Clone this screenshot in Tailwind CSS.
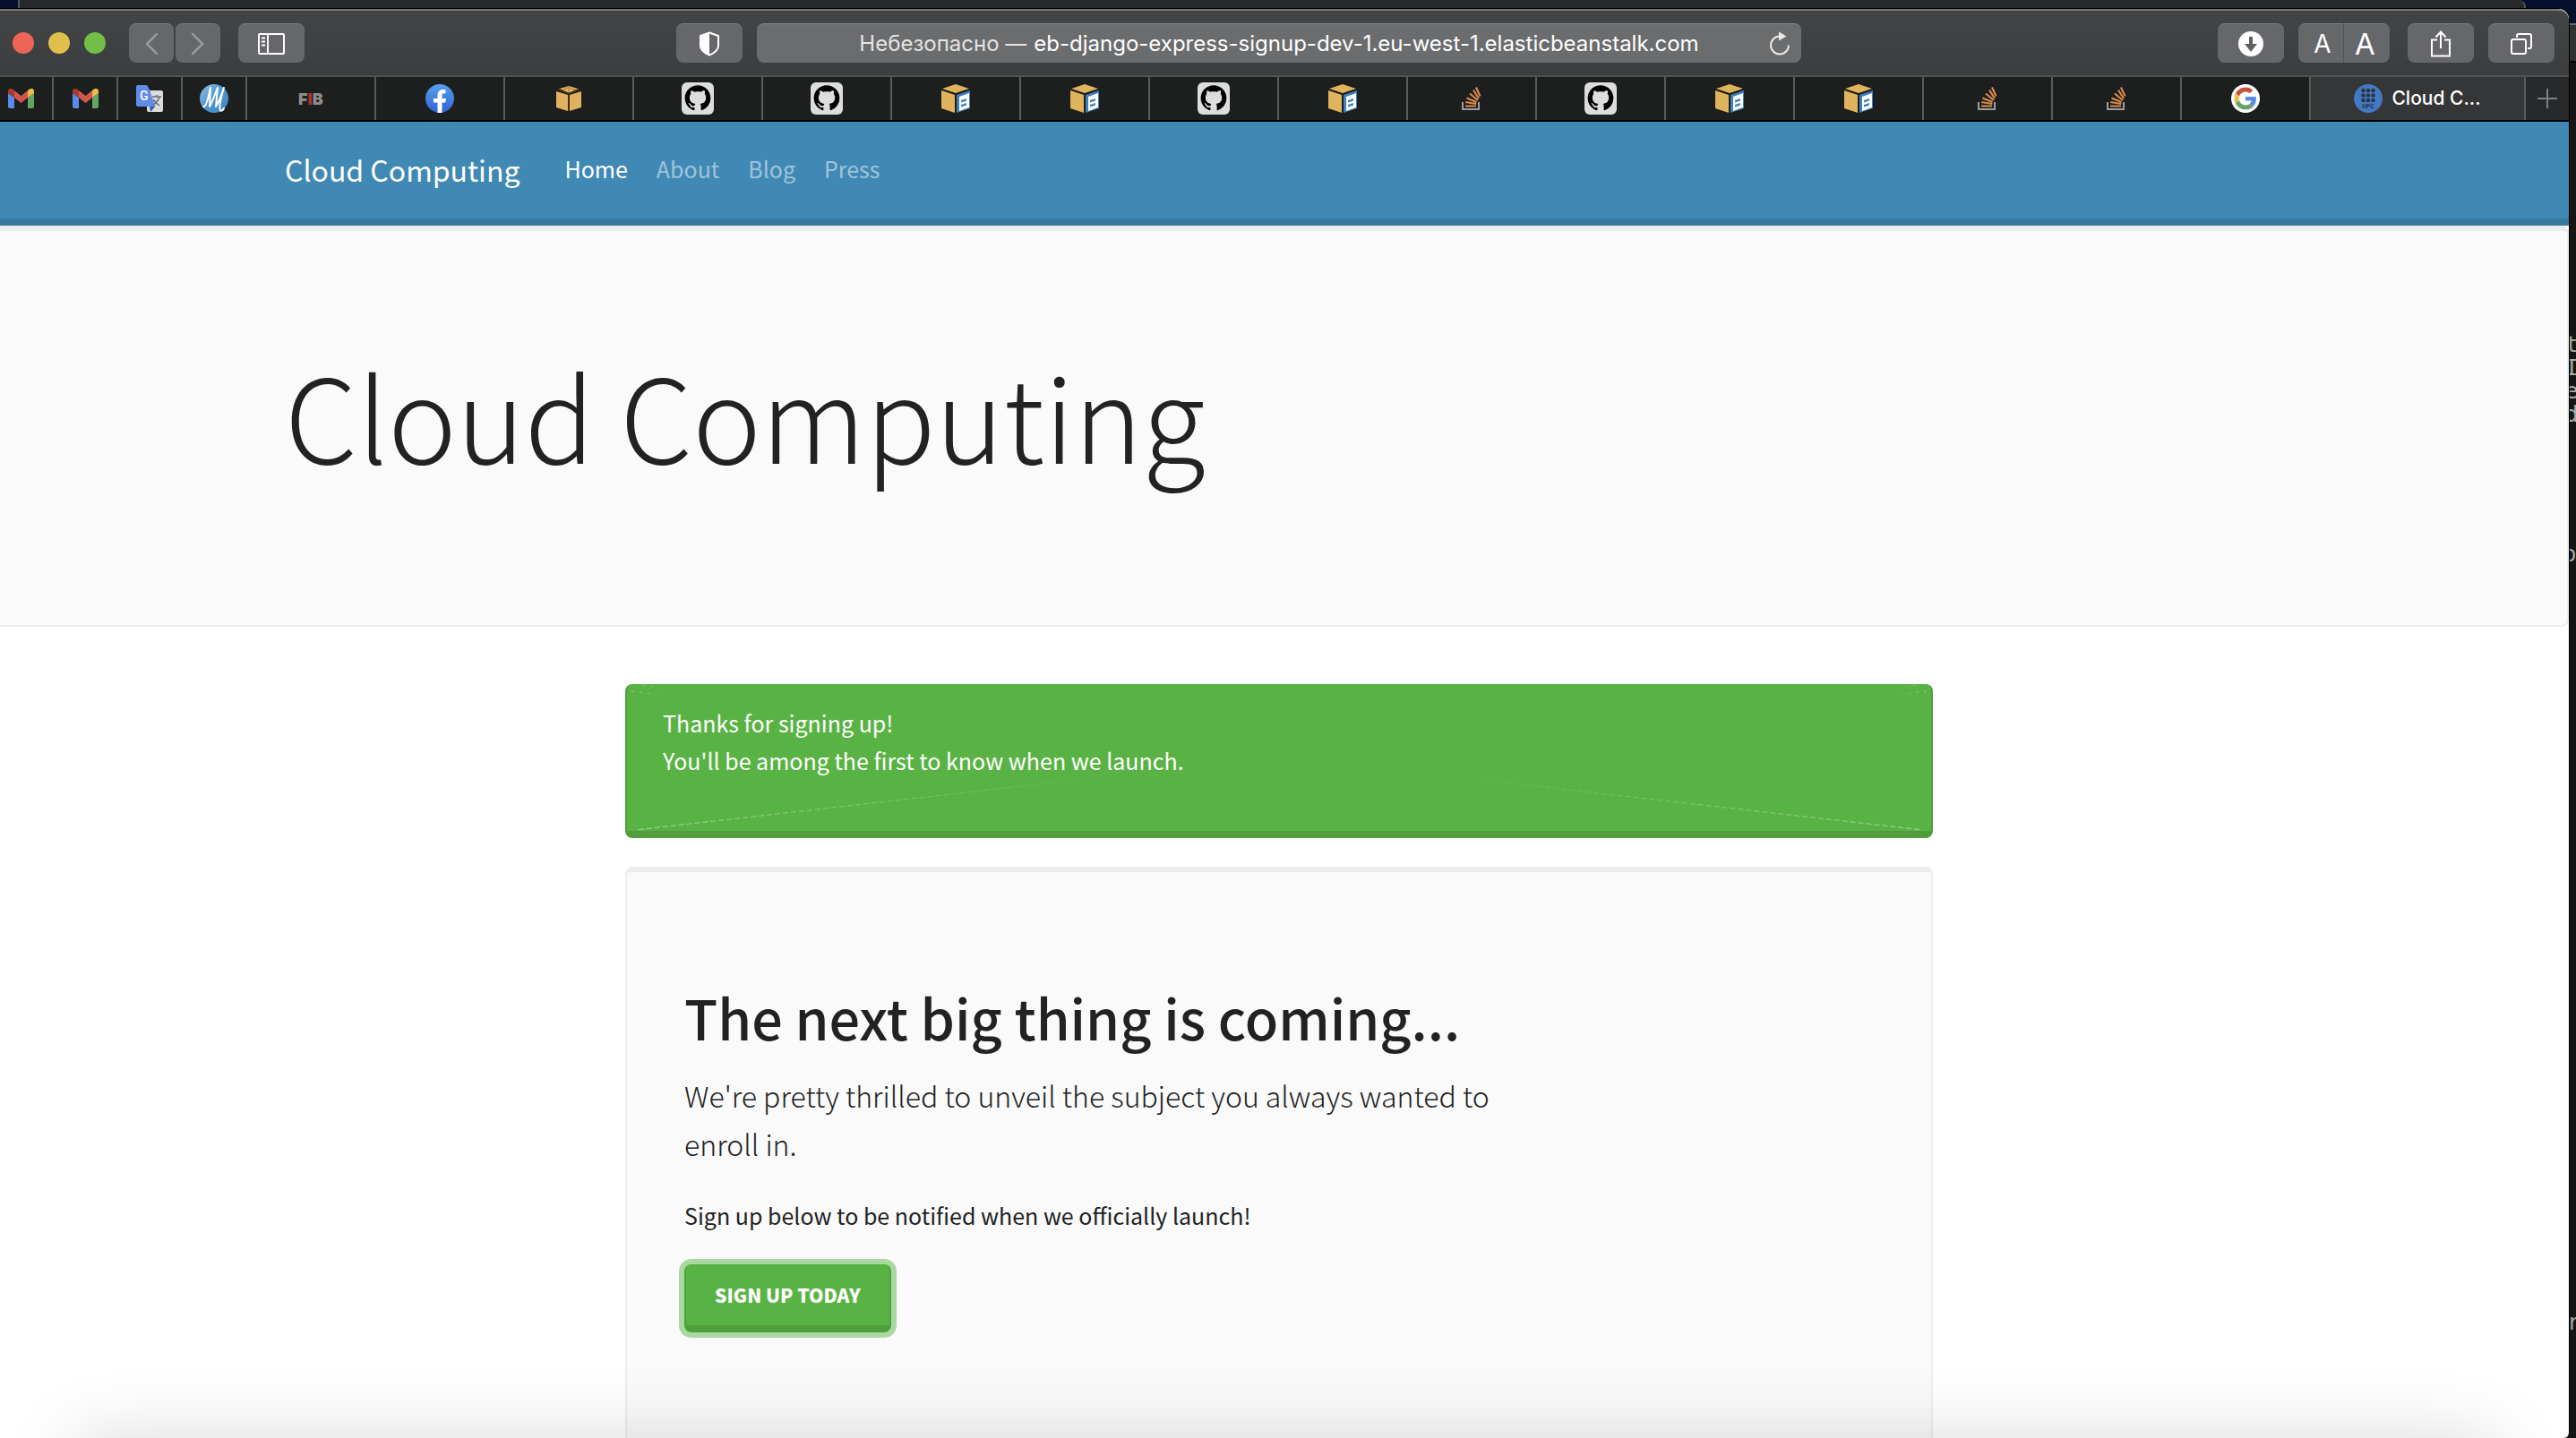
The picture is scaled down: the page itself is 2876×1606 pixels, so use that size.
<!DOCTYPE html>
<html lang="en">
<head>
<meta charset="utf-8">
<title>Cloud Computing</title>
<script src="https://cdn.jsdelivr.net/npm/@tailwindcss/browser@4"></script>
</head>
<body class="relative h-screen overflow-hidden bg-[#04102c] font-['Noto_Sans_CJK_SC','Noto_Sans',sans-serif] text-[#222]">

<!-- Gradients must stay rendered to be usable, so this one is sized to zero rather than hidden -->
<svg class="absolute size-0" aria-hidden="true">
  <linearGradient id="mg" x1="0" y1="0" x2="1" y2="1"><stop offset="0" stop-color="#8fc0e6"/><stop offset=".5" stop-color="#4f96cf"/><stop offset="1" stop-color="#3f86c2"/></linearGradient>
  <linearGradient id="fbg" x1="0" y1="0" x2="0" y2="1"><stop offset="0" stop-color="#56a0ee"/><stop offset="1" stop-color="#2f62d4"/></linearGradient>
</svg>
<svg class="hidden" aria-hidden="true">
  <symbol id="gmail" viewBox="0 0 29 22">
    <path d="M0 5v15c0 1 1 2 2 2h5V10z" fill="#5b8bea"/>
    <path d="M29 5v15c0 1-1 2-2 2h-5V10z" fill="#62a564"/>
    <path d="M0 5v-2C0 0 3-1 5 .5L7 2v8L0 5z" fill="#a83a30"/>
    <path d="M29 5v-2C29 0 26-1 24 .5L22 2v8l7-5z" fill="#e9bc4c"/>
    <path d="M7 2l7.500 6L22 2v8l-7.500 6L7 10z" fill="#d2574a"/>
  </symbol>
  <symbol id="translate" viewBox="0 0 30 30">
    <rect x="12" y="6" width="18" height="24" rx="2" fill="#dcdcdc"/>
    <path d="M15 23h7l-6 7z" fill="#3a55b0"/>
    <path d="M2 0h10l3 5 6 19H2a2 2 0 0 1-2-2V2a2 2 0 0 1 2-2z" fill="#5f8ce8"/>
    <path d="M18 13h10M23 11v2m3 0c-1 4-4 7-7 9m0-6c2 3 4 5 7 7" stroke="#5d6f7a" stroke-width="1.500" fill="none"/>
    <text x="4" y="17" font-family="Roboto, sans-serif" font-size="14" font-weight="500" fill="#fff">G</text>
  </symbol>
  <symbol id="script-m" viewBox="0 0 32 32">
    <circle cx="16" cy="16" r="16" fill="url(#mg)"/>
    <path d="M4 25c3 1 5-8 8-21l-1 21c4-7 6-14 9-21l-2 21c4-6 6-13 9-21-3 10-6 22-4 25 1 2 3 0 4-2" fill="none" stroke="#fff" stroke-width="2" stroke-linejoin="round" stroke-linecap="round"/>
  </symbol>
  <symbol id="facebook" viewBox="0 0 32 32">
    <circle cx="16" cy="16" r="16" fill="url(#fbg)"/>
    <path d="M13.500 32V20.500H9V16h4.500v-3.500C13.500 8.500 16 6 19.500 6c1.500 0 3 .3 3 .3v4h-1.700c-2 0-2.300 1-2.300 2.200V16h4.500l-.8 4.500h-3.700V32z" fill="#fff"/>
  </symbol>
  <symbol id="box" viewBox="0 0 28 28">
    <path d="M14 0l12 3.500-12 4.500L2 3.500z" fill="#dfb160"/>
    <path d="M0 6l13 4v18L0 24z" fill="#dfb160"/>
    <path d="M28 6l-13 4v18l13-4z" fill="#dfb160"/>
    <path d="M5 5.500l9-4 9 4M14 9V2" stroke="#6b4f1e" stroke-width="1" fill="none" opacity=".5"/>
    <path d="M3 4l11 5 11-5M14 9v19" stroke="#3b2b12" stroke-width="2" fill="none"/>
  </symbol>
  <symbol id="github" viewBox="0 0 36 36">
    <rect width="36" height="36" rx="6" fill="#dcdddd"/>
    <path transform="translate(3.600 3.200) scale(1.800)" d="M8 0C3.580 0 0 3.580 0 8c0 3.540 2.290 6.530 5.470 7.590.4.070.55-.17.55-.38 0-.19-.01-.82-.01-1.490-2.010.37-2.530-.49-2.690-.94-.09-.23-.48-.94-.82-1.130-.28-.15-.68-.52-.01-.53.63-.01 1.080.58 1.230.82.72 1.210 1.870.87 2.330.66.070-.52.28-.87.51-1.070-1.780-.2-3.640-.89-3.640-3.950 0-.87.31-1.590.82-2.150-.08-.2-.36-1.020.08-2.120 0 0 .67-.21 2.200.82.64-.18 1.320-.27 2-.27.68 0 1.360.09 2 .27 1.530-1.040 2.200-.82 2.200-.82.44 1.100.16 1.920.08 2.120.51.56.82 1.270.82 2.150 0 3.070-1.870 3.750-3.650 3.950.29.25.54.73.54 1.480 0 1.070-.01 1.930-.01 2.200 0 .21.15.46.55.38A8.013 8.013 0 0016 8c0-4.420-3.580-8-8-8z"/>
  </symbol>
  <symbol id="aws" viewBox="0 0 32 32">
    <path d="M16 0l15 5-15 5L1 5z" fill="#dfb45c"/>
    <path d="M0 7l15 5v20L0 27z" fill="#dfb45c"/>
    <path d="M17 12l15-5v20l-15 5z" fill="#3f7fba"/>
    <path d="M20 14l11-4v16l-11 4z" fill="#fff"/>
    <path d="M22 18l6-2v2.500l-6 2zM22 23l6-2v2.500l-6 2z" fill="#3f7fba"/>
  </symbol>
  <symbol id="stack" viewBox="0 0 22 26">
    <path d="M1 17v8h18v-8" fill="none" stroke="#9b9fa3" stroke-width="2"/>
    <path d="M4 21.500h12M4.300 17l12 2M5.500 12.500l11 4.500M9 7.500l9 7.500M13 3.500l6 9.500M16 .5l4.500 10" stroke="#d98a4b" stroke-width="2.200" fill="none"/>
  </symbol>
  <symbol id="google" viewBox="0 0 32 32">
    <circle cx="16" cy="16" r="16" fill="#fff"/>
    <g transform="translate(3.500 3.500) scale(.52)">
      <path fill="#c9503f" d="M24 9.500c3.540 0 6.710 1.220 9.210 3.600l6.850-6.850C35.900 2.380 30.470 0 24 0 14.620 0 6.510 5.380 2.560 13.220l7.980 6.190C12.430 13.720 17.740 9.500 24 9.500z"/>
      <path fill="#5b8bea" d="M46.980 24.550c0-1.570-.15-3.090-.38-4.550H24v9.020h12.940c-.58 2.960-2.260 5.480-4.780 7.180l7.730 6c4.510-4.180 7.090-10.360 7.090-17.650z"/>
      <path fill="#e9bc4c" d="M10.530 28.590c-.48-1.450-.76-2.990-.76-4.590s.27-3.140.76-4.590l-7.980-6.190C.92 16.460 0 20.120 0 24c0 3.880.92 7.540 2.560 10.780l7.970-6.190z"/>
      <path fill="#62a564" d="M24 48c6.480 0 11.930-2.130 15.890-5.810l-7.730-6c-2.150 1.450-4.920 2.300-8.160 2.300-6.260 0-11.570-4.220-13.470-9.910l-7.980 6.190C6.510 42.620 14.620 48 24 48z"/>
    </g>
  </symbol>
  <symbol id="upc" viewBox="0 0 32 32">
    <circle cx="16" cy="16" r="16" fill="#4379c4"/>
    <g fill="#2b3440">
      <circle cx="10.500" cy="7" r="2.300"/><circle cx="16" cy="7" r="2.300"/><circle cx="21.500" cy="7" r="2.300"/>
      <circle cx="10.500" cy="12.500" r="2.300"/><circle cx="16" cy="12.500" r="2.300"/><circle cx="21.500" cy="12.500" r="2.300"/>
      <circle cx="10.500" cy="18" r="2.300"/><circle cx="16" cy="18" r="2.300"/><circle cx="21.500" cy="18" r="2.300"/>
    </g>
    <text x="16" y="27" text-anchor="middle" font-family="Roboto, sans-serif" font-size="7" font-weight="700" fill="#2b3440">UPC</text>
  </symbol>
</svg>

<!-- Windows behind the browser -->
<div class="absolute top-0 left-5 right-14 h-3 rounded-tr-lg border-x-2 border-[#55575a] bg-[#27282a]"></div>
<aside class="absolute top-[26px] right-0 bottom-0 w-6 overflow-hidden bg-[#151515] font-['DejaVu_Sans_Mono',monospace] text-[24px] leading-[26px] text-[#a9a9a9]" aria-hidden="true">
  <div class="h-11 border-t-2 border-b-2 border-t-[#6a6b6d] border-b-black bg-[#303133]"></div>
  <p class="absolute top-[346px] left-3">t<br>I<br>e<br>d</p>
  <p class="absolute top-[580px] left-[10px]">o</p>
  <p class="absolute top-[1438px] left-[14px]">r</p>
</aside>

<!-- Browser window -->
<div class="absolute top-[9px] bottom-0 -left-3 right-[7px] flex flex-col overflow-hidden rounded-tr-xl rounded-br-md border-t border-r border-black bg-white">
  <header class="shrink-0 rounded-tr-xl border-t-2 border-[#77787a] bg-linear-to-b from-[#434446] to-[#37383a] font-['Inter','Noto_Sans',sans-serif] text-white">
    <div class="flex h-[74px] items-center border-b-2 border-[#505153] pr-4 pl-[26px]">
      <div class="flex gap-4">
        <button aria-label="Close" class="size-6 rounded-full bg-[#ee6558]"></button>
        <button aria-label="Minimise" class="size-6 rounded-full bg-[#e0c04c]"></button>
        <button aria-label="Zoom" class="size-6 rounded-full bg-[#71bf47]"></button>
      </div>
      <div class="ml-[26px] flex gap-0.5">
        <button aria-label="Back" class="flex h-11 w-[50px] items-center justify-center rounded-lg border-t border-[#7d7e80] bg-[#66676a]"><svg class="h-6 w-4" viewBox="0 0 16 24" fill="none" stroke="#97989a" stroke-width="2.500" stroke-linecap="round" stroke-linejoin="round"><path d="M14 1L3 12l11 11"/></svg></button>
        <button aria-label="Forward" class="flex h-11 w-[50px] items-center justify-center rounded-lg border-t border-[#7d7e80] bg-[#66676a]"><svg class="h-6 w-4" viewBox="0 0 16 24" fill="none" stroke="#97989a" stroke-width="2.500" stroke-linecap="round" stroke-linejoin="round"><path d="M2 1l11 11L2 23"/></svg></button>
      </div>
      <button aria-label="Sidebar" class="ml-5 flex h-11 w-[74px] items-center justify-center rounded-lg border-t border-[#7d7e80] bg-[#66676a]"><svg class="h-6 w-[30px]" viewBox="0 0 30 24" fill="none" stroke="#fff" stroke-width="2"><rect x="1" y="1" width="28" height="22" rx="1"/><path d="M11 1v22M4 5.500h4M4 9.500h4M4 13.500h4"/></svg></button>
      <div class="flex-[415]"></div>
      <button aria-label="Privacy report" class="flex h-11 w-[74px] items-center justify-center rounded-lg border-t border-[#7d7e80] bg-[#66676a]"><svg class="h-7 w-6" viewBox="0 0 24 28"><path d="M12 1.500L22 5v11c0 5-5 8.500-10 10.500C7 24.500 2 21 2 16V5z" fill="none" stroke="#fff" stroke-width="2"/><path d="M12 1L1.500 5v11c0 5 5 9 10.500 11z" fill="#fff"/></svg></button>
      <div class="ml-4 flex h-11 w-[1166px] items-center rounded-lg border-t border-[#87888a] bg-[#6b6c6e] px-3 text-[24px]">
        <label class="flex flex-1 items-center justify-center gap-2 pl-6 whitespace-nowrap"><span class="text-[#e4e4e4]">Небезопасно —</span><input type="text" class="field-sizing-content bg-transparent outline-none" value="eb-django-express-signup-dev-1.eu-west-1.elasticbeanstalk.com"></label>
        <button aria-label="Reload" class="h-7 w-6"><svg class="h-7 w-6" viewBox="0 0 24 28" fill="none" stroke="#e8e8e8" stroke-width="2"><path d="M12 5.500A10 10 0 1 0 22 15.500"/><path d="M11 .5v10l8.500-5z" fill="#e8e8e8" stroke="none"/></svg></button>
      </div>
      <div class="flex-[465]"></div>
      <button aria-label="Downloads" class="flex h-11 w-[74px] items-center justify-center rounded-lg border-t border-[#7d7e80] bg-[#66676a]"><svg class="size-7" viewBox="0 0 28 28"><circle cx="14" cy="14" r="14" fill="#fff"/><path d="M12 6h4v8h5l-7 9-7-9h5z" fill="#5f6062"/></svg></button>
      <div class="ml-4 flex">
        <button aria-label="Smaller text" class="h-11 w-[51px] rounded-l-lg border-t border-r border-t-[#7d7e80] border-r-[#505153] bg-[#66676a] pl-1 text-[28px] leading-10">A</button>
        <button aria-label="Larger text" class="h-11 w-[51px] rounded-r-lg border-t border-[#7d7e80] bg-[#66676a] pr-1 text-[33px] leading-10">A</button>
      </div>
      <button aria-label="Share" class="ml-5 flex h-11 w-[74px] items-center justify-center rounded-lg border-t border-[#7d7e80] bg-[#66676a]"><svg class="h-[30px] w-6" viewBox="0 0 24 30" fill="none" stroke="#fff" stroke-width="2"><path d="M8 10.500H2V28.500h20v-18h-6M12 20V2M6.500 7.500L12 1.500l5.500 6"/></svg></button>
      <button aria-label="Tab overview" class="ml-4 flex h-11 w-[74px] items-center justify-center rounded-lg border-t border-[#7d7e80] bg-[#66676a]"><svg class="size-6" viewBox="0 0 24 24" fill="none" stroke="#fff" stroke-width="2"><rect x="1" y="7" width="16" height="16" rx="2"/><path d="M7 5V3a2 2 0 0 1 2-2h12a2 2 0 0 1 2 2v12a2 2 0 0 1-2 2h-2"/></svg></button>
    </div>
    <nav aria-label="Tabs" class="flex h-[50px] items-stretch border-b-2 border-black bg-[#1d1e1e]">
      <a href="#" aria-label="Gmail" class="flex w-[72px] items-center justify-center border-r-2 border-[#5a5b5c]"><svg class="h-[22px] w-[29px]"><use href="#gmail"/></svg></a>
      <a href="#" aria-label="Gmail" class="flex w-[72px] items-center justify-center border-r-2 border-[#5a5b5c]"><svg class="h-[22px] w-[29px]"><use href="#gmail"/></svg></a>
      <a href="#" aria-label="Translate" class="flex w-[72px] items-center justify-center border-r-2 border-[#5a5b5c]"><svg class="size-[30px]"><use href="#translate"/></svg></a>
      <a href="#" aria-label="M" class="flex w-[72px] items-center justify-center border-r-2 border-[#5a5b5c]"><svg class="size-8"><use href="#script-m"/></svg></a>
      <a href="#" class="flex flex-1 items-center justify-center border-r-2 border-[#5a5b5c] text-[18px] font-black text-[#8d8d8d]">F<span class="text-[#b03434]">I</span>B</a>
      <a href="#" aria-label="Facebook" class="flex flex-1 items-center justify-center border-r-2 border-[#5a5b5c]"><svg class="size-8"><use href="#facebook"/></svg></a>
      <a href="#" aria-label="AWS" class="flex flex-1 items-center justify-center border-r-2 border-[#5a5b5c]"><svg class="size-7"><use href="#box"/></svg></a>
      <a href="#" aria-label="GitHub" class="flex flex-1 items-center justify-center border-r-2 border-[#5a5b5c]"><svg class="size-9"><use href="#github"/></svg></a>
      <a href="#" aria-label="GitHub" class="flex flex-1 items-center justify-center border-r-2 border-[#5a5b5c]"><svg class="size-9"><use href="#github"/></svg></a>
      <a href="#" aria-label="AWS docs" class="flex flex-1 items-center justify-center border-r-2 border-[#5a5b5c]"><svg class="size-8"><use href="#aws"/></svg></a>
      <a href="#" aria-label="AWS docs" class="flex flex-1 items-center justify-center border-r-2 border-[#5a5b5c]"><svg class="size-8"><use href="#aws"/></svg></a>
      <a href="#" aria-label="GitHub" class="flex flex-1 items-center justify-center border-r-2 border-[#5a5b5c]"><svg class="size-9"><use href="#github"/></svg></a>
      <a href="#" aria-label="AWS docs" class="flex flex-1 items-center justify-center border-r-2 border-[#5a5b5c]"><svg class="size-8"><use href="#aws"/></svg></a>
      <a href="#" aria-label="Stack Overflow" class="flex flex-1 items-center justify-center border-r-2 border-[#5a5b5c]"><svg class="h-[26px] w-[22px]"><use href="#stack"/></svg></a>
      <a href="#" aria-label="GitHub" class="flex flex-1 items-center justify-center border-r-2 border-[#5a5b5c]"><svg class="size-9"><use href="#github"/></svg></a>
      <a href="#" aria-label="AWS docs" class="flex flex-1 items-center justify-center border-r-2 border-[#5a5b5c]"><svg class="size-8"><use href="#aws"/></svg></a>
      <a href="#" aria-label="AWS docs" class="flex flex-1 items-center justify-center border-r-2 border-[#5a5b5c]"><svg class="size-8"><use href="#aws"/></svg></a>
      <a href="#" aria-label="Stack Overflow" class="flex flex-1 items-center justify-center border-r-2 border-[#5a5b5c]"><svg class="h-[26px] w-[22px]"><use href="#stack"/></svg></a>
      <a href="#" aria-label="Stack Overflow" class="flex flex-1 items-center justify-center border-r-2 border-[#5a5b5c]"><svg class="h-[26px] w-[22px]"><use href="#stack"/></svg></a>
      <a href="#" aria-label="Google" class="flex flex-1 items-center justify-center border-r-2 border-[#5a5b5c]"><svg class="size-8"><use href="#google"/></svg></a>
      <a href="#" aria-current="page" class="flex w-[240px] items-center justify-center gap-[10px] border-r-2 border-[#5a5b5c] bg-[#353638] text-[21px] font-medium"><svg class="size-8"><use href="#upc"/></svg>Cloud C...</a>
      <button aria-label="New tab" class="flex w-12 items-center justify-center bg-[#27282a]"><svg class="size-[22px]" viewBox="0 0 22 22" stroke="#7e7f80" stroke-width="2"><path d="M11 0v22M0 11h22"/></svg></button>
    </nav>
  </header>

  <!-- Page -->
  <div class="flex-1 overflow-hidden">
    <nav aria-label="Main" class="border-b-8 border-[#367aa1] bg-[#4089b5]">
      <div class="mx-auto flex h-[108px] max-w-[2280px] items-center px-[30px] pb-0.5">
        <a href="#" class="mr-[34px] text-[32px] text-white">Cloud Computing</a>
        <ul class="flex text-[25px] text-white/50">
          <li><a href="#" class="px-4 text-white">Home</a></li>
          <li><a href="#" class="px-4">About</a></li>
          <li><a href="#" class="px-4">Blog</a></li>
          <li><a href="#" class="px-4">Press</a></li>
        </ul>
      </div>
    </nav>

    <section class="rounded-lg border-2 border-t-6 border-[#ededed] bg-[#fafafa] pt-[126px] pb-[158px]">
      <div class="mx-auto max-w-[2280px] px-[30px]">
        <h1 class="text-[129px] leading-[156px] font-light">Cloud Computing</h1>
      </div>
    </section>

    <main class="mx-auto mt-16 flex max-w-[1460px] flex-col gap-8 text-[25px] leading-[42px]">
      <div role="alert" class="relative rounded-lg border-x-2 border-b-8 border-[#4f9e3b] bg-[#59b344] px-10 pt-[22px] pb-[58px] text-white">
        <p>Thanks for signing up!</p>
        <p>You'll be among the first to know when we launch.</p>
        <svg class="absolute top-0 left-0 h-[164px] w-[540px]" viewBox="0 0 540 164" fill="none" aria-hidden="true">
          <linearGradient id="fade" gradientUnits="userSpaceOnUse" x1="0" y1="0" x2="540" y2="0"><stop offset="0" stop-color="#fff" stop-opacity=".5"/><stop offset="1" stop-color="#fff" stop-opacity="0"/></linearGradient>
          <linearGradient id="fade-short" gradientUnits="userSpaceOnUse" x1="0" y1="0" x2="44" y2="0"><stop offset="0" stop-color="#fff" stop-opacity=".4"/><stop offset="1" stop-color="#fff" stop-opacity="0"/></linearGradient>
          <g id="rays">
            <path d="M13 162.500L538 103" stroke="url(#fade)" stroke-dasharray="6 3"/>
            <path d="M5 8l30 4M17 1l25 4" stroke="url(#fade-short)" stroke-dasharray="3 6"/>
          </g>
        </svg>
        <svg class="absolute top-0 right-0 h-[164px] w-[540px] -scale-x-100" viewBox="0 0 540 164" fill="none" aria-hidden="true"><use href="#rays"/></svg>
      </div>

      <section class="h-[800px] rounded-lg border-2 border-t-6 border-[#ededed] bg-[#fafafa] px-16 pt-[122px]">
        <h2 class="text-[61px] leading-20 font-medium">The next big thing is coming...</h2>
        <p class="mt-5 max-w-[920px] text-[32px] leading-[54px] font-light">We're pretty thrilled to unveil the subject you always wanted to enroll in.</p>
        <p class="mt-8">Sign up below to be notified when we officially launch!</p>
        <button class="mt-[34px] h-[76px] rounded-lg border-x-2 border-b-8 border-[#4f9e3b] bg-[#59b344] px-8 text-[21px] font-black text-white ring-6 ring-[#a9d8a0]">SIGN UP TODAY</button>
      </section>
    </main>
  </div>

  <!-- Shadow cast by the dock -->
  <div class="pointer-events-none absolute top-full right-[82px] left-[96px] h-40 shadow-[0_0_80px_rgba(0,0,0,0.15)]"></div>
</div>
</body>
</html>
